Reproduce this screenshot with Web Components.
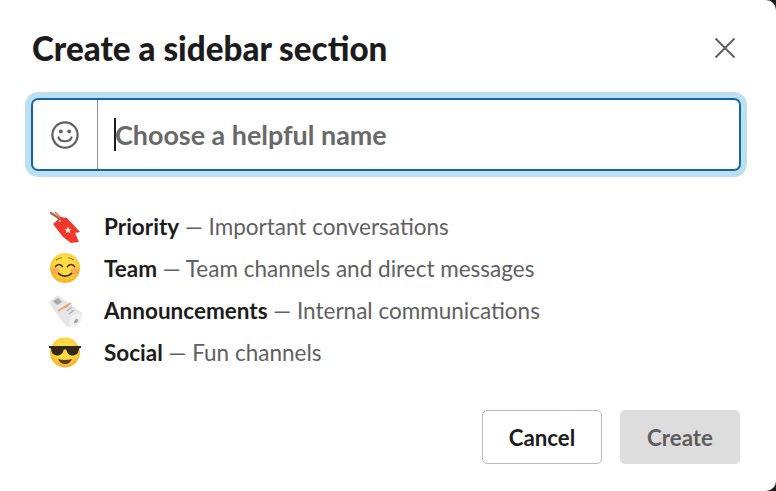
<!DOCTYPE html>
<html>
<head>
<meta charset="utf-8">
<style>
  html, body { margin: 0; height: 100%; background: #fff; }
  body { font-family: Lato, sans-serif; color: #1d1c1d; }
</style>
</head>
<body>
<template id="row-tpl">
  <style>
    :host { display: flex; align-items: center; height: 42px; font-size: 22.5px; color: #616061; }
    .icon { width: 34px; height: 34px; margin-right: 22px; flex: none; }
    b { font-weight: 700; color: #1d1c1d; }
  </style>
  <span class="icon"><slot name="icon"></slot></span>
  <span><b><slot name="label"></slot></b> — <slot></slot></span>
</template>

<section-dialog>
  <section-row>
    <svg slot="icon" width="34" height="34" viewBox="0 0 34 34">
      <path d="M3 4 L12 10" stroke="#a5673f" stroke-width="2.2" stroke-linecap="round"/>
      <path d="M7 3 L13 9" stroke="#c98a5a" stroke-width="1.6" stroke-linecap="round"/>
      <path d="M13 8 L19 9 L32 23 L27 24 L31 33 L23 34 L15 28 L5 15 Z" fill="#f0382c"/>
      <circle cx="12" cy="12" r="1" fill="#fde4cf"/>
      <path d="M20 17.5 l1 2.4 2.5 .2 -1.9 1.7 .6 2.5 -2.2 -1.3 -2.2 1.3 .6 -2.5 -1.9 -1.7 2.5 -.2 Z" fill="#fde4cf"/>
    </svg>
    <span slot="label">Priority</span>Important conversations
  </section-row>
  <section-row>
    <svg slot="icon" width="34" height="34" viewBox="0 0 34 34">
      <defs>
        <radialGradient id="f1" cx=".5" cy=".4" r=".65"><stop offset=".5" stop-color="#fedb41"/><stop offset="1" stop-color="#f6a41c"/></radialGradient>
      </defs>
      <circle cx="17" cy="17" r="15" fill="url(#f1)"/>
      <ellipse cx="7.5" cy="20" rx="4" ry="3" fill="#f59a6a" opacity=".75"/>
      <ellipse cx="26.5" cy="20" rx="4" ry="3" fill="#f59a6a" opacity=".75"/>
      <path d="M7.5 15.5 q3.5 -4 7 0 M19.5 15.5 q3.5 -4 7 0" fill="none" stroke="#4a3520" stroke-width="1.7" stroke-linecap="round"/>
      <path d="M8.5 9 q2.5 -2 5 -2.2 M20.5 6.8 q2.5 .2 5 2.2" fill="none" stroke="#a8701c" stroke-width="1.1" stroke-linecap="round"/>
      <path d="M10.5 22.5 q6.5 5.5 13 0" fill="none" stroke="#4a3520" stroke-width="1.8" stroke-linecap="round"/>
    </svg>
    <span slot="label">Team</span>Team channels and direct messages
  </section-row>
  <section-row>
    <svg slot="icon" width="34" height="34" viewBox="0 0 34 34">
      <path d="M1 9 L10 2 L34 20 C34 27 31 33 26 34 C22 34 19 33 18 33 L8 20 Z" fill="#e6e6e6"/>
      <path d="M5 8 L10 5 L14 9 L9 12 Z" fill="#a8a8a8"/>
      <path d="M17 15 L21 12 M19 18 L24 14 M21 21 L26 17" stroke="#b0b0b0" stroke-width="1.3"/>
      <path d="M10 18 L23 10" stroke="#f0a070" stroke-width="1.8"/>
      <path d="M21 29 C22 23 28 19 33 21 C34 27 31 33 26 34 C23 34 21 32 21 29 Z" fill="#f2f2f2"/>
      <path d="M26 30 C26 27 28 25 30 26 C31 28 29 31 26 30 Z" fill="#a8a8a8"/>
    </svg>
    <span slot="label">Announcements</span>Internal communications
  </section-row>
  <section-row>
    <svg slot="icon" width="34" height="34" viewBox="0 0 34 34">
      <defs>
        <radialGradient id="f2" cx=".5" cy=".4" r=".65"><stop offset=".5" stop-color="#fedb41"/><stop offset="1" stop-color="#f6a41c"/></radialGradient>
      </defs>
      <circle cx="17" cy="17.5" r="15" fill="url(#f2)"/>
      <path d="M1 11 H33 V13 L31 13.5 C30.5 18.5 28 20.5 24.5 20.5 C21 20.5 19 18 18.3 14.5 H15.7 C15 18 13 20.5 9.5 20.5 C6 20.5 3.5 18.5 3 13.5 L1 13 Z" fill="#33261a"/>
      <path d="M10 24 Q17 26 24 24 Q22 29 17 29 Q12 29 10 24 Z" fill="#5b3a17"/>
    </svg>
    <span slot="label">Social</span>Fun channels
  </section-row>
</section-dialog>

<script>
class SectionRow extends HTMLElement {
  constructor() {
    super();
    this.attachShadow({ mode: 'open' });
    this.shadowRoot.appendChild(document.getElementById('row-tpl').content.cloneNode(true));
  }
}

class NameInput extends HTMLElement {
  constructor() {
    super();
    this.attachShadow({ mode: 'open' });
    this.shadowRoot.innerHTML = `
      <style>
        :host { display: flex; box-sizing: border-box; height: 71px; border: 1px solid #1264a3; border-radius: 6px; box-shadow: 0 0 0 1px #1264a3, 0 0 0 7px #bde0f0; background: #fff; }
        .emoji { width: 65px; box-sizing: border-box; flex: none; display: flex; align-items: center; justify-content: center; border-right: 1px solid #919191; }
        .field { flex: 1; display: flex; align-items: center; padding-left: 16px; font-size: 26.9px; font-weight: 700; color: #696969; }
        .caret { width: 2px; height: 33px; background: #1d1c1d; margin-right: -1px; }
      </style>
      <div class="emoji">
        <svg width="30" height="30" viewBox="0 0 30 30" fill="none" stroke="#616061" stroke-width="2.2" stroke-linecap="round">
          <circle cx="15" cy="15" r="12.6"/>
          <path d="M8.5 17.5 C10 22.5 20 22.5 21.5 17.5"/>
          <circle cx="10.8" cy="11.5" r="1.9" fill="#616061" stroke="none"/>
          <circle cx="19.2" cy="11.5" r="1.9" fill="#616061" stroke="none"/>
        </svg>
      </div>
      <div class="field"><span class="caret"></span><span>Choose a helpful name</span></div>
    `;
  }
}

class DialogButton extends HTMLElement {
  constructor() {
    super();
    this.attachShadow({ mode: 'open' });
    this.shadowRoot.innerHTML = `
      <style>
        :host { display: flex; align-items: center; justify-content: center; box-sizing: border-box; width: 120px; height: 54px; border-radius: 5px; font-size: 22.3px; font-weight: 700; border: 1px solid #bbbabb; color: #1d1c1d; background: #fff; }
        :host([disabled]) { border-color: #dddddd; background: #dddddd; color: #5e5d5e; }
      </style>
      <slot></slot>
    `;
  }
}

class SectionDialog extends HTMLElement {
  constructor() {
    super();
    this.attachShadow({ mode: 'open' });
    this.shadowRoot.innerHTML = `
      <style>
        :host { display: flex; flex-direction: column; box-sizing: border-box; height: 491px; padding: 0 36px 0 32px; background: #fff; position: relative; overflow: hidden; }
        header { display: flex; align-items: center; justify-content: space-between; box-sizing: border-box; height: 97px; padding-bottom: 1px; margin-right: -1px; }
        h1 { margin: 0; font-size: 33.2px; font-weight: 900; color: #1d1c1d; }
        .close { margin-right: 5px; display: block; }
        name-input { margin: 2px 0 0 0; }
        .rows { display: flex; flex-direction: column; margin: 35px 0 0 0; padding-left: 16px; }
        footer { display: flex; justify-content: flex-end; gap: 18px; margin-top: 37px; }
        .corner { position: absolute; width: 10px; height: 10px; background: #1d1c1d; }
        .corner i { display: block; width: 100%; height: 100%; background: #fff; }
        .tr { top: 0; right: 0; }
        .tr i { border-top-right-radius: 10px; }
        .br { bottom: 0; right: 0; }
        .br i { border-bottom-right-radius: 10px; }
      </style>
      <header>
        <h1>Create a sidebar section</h1>
        <svg class="close" width="22" height="22" viewBox="0 0 22 22" fill="none" stroke="#616061" stroke-width="2"><path d="M1.5 1.5 L20.5 20.5 M20.5 1.5 L1.5 20.5"/></svg>
      </header>
      <name-input></name-input>
      <div class="rows"><slot></slot></div>
      <footer>
        <dialog-button>Cancel</dialog-button>
        <dialog-button disabled>Create</dialog-button>
      </footer>
      <span class="corner tr"><i></i></span>
      <span class="corner br"><i></i></span>
    `;
  }
}

customElements.define('section-row', SectionRow);
customElements.define('name-input', NameInput);
customElements.define('dialog-button', DialogButton);
customElements.define('section-dialog', SectionDialog);
</script>
</body>
</html>
